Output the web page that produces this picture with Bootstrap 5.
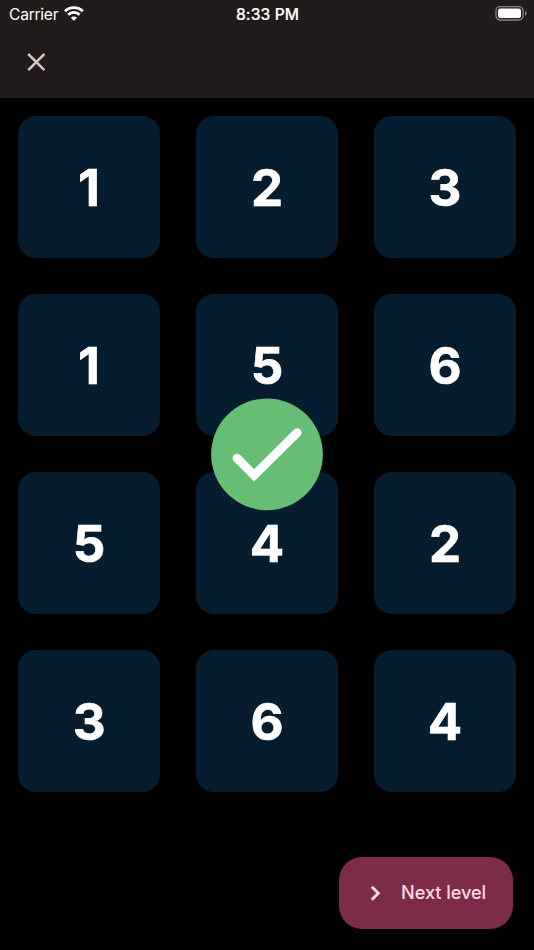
<!DOCTYPE html>
<html lang="en">
<head>
<meta charset="utf-8">
<meta name="viewport" content="width=device-width, initial-scale=1">
<title>Memory</title>
<link href="https://cdn.jsdelivr.net/npm/bootstrap@5.3.0/dist/css/bootstrap.min.css" rel="stylesheet">
<style>
  body { background: #000; font-family: Inter, "Liberation Sans", sans-serif; min-height: 950px; }
  .app-top { background: #211b1b; height: 98px; }
  .status { height: 28px; padding: 0 7px 0 9px; color: #fff; font-size: 15.6px; line-height: 28px; }
  .status > * { flex: 1 1 0; }
  .carrier { letter-spacing: -.26px; padding-top: 1px; }
  .wifi { margin-left: 5px; }
  .clock { font-weight: 500; letter-spacing: .1px; padding-top: 1px; padding-right: 1px; -webkit-text-stroke: .2px #fff; }
  .toolbar { height: 68px; padding-left: 26px; }
  .close-btn { color: #d9c5c6; line-height: 0; }
  .board { display: grid; grid-template-columns: repeat(3, 142.2px); grid-auto-rows: 142.2px; gap: 35.8px; padding: 18.3px 18px 0; }
  .tile { background: #061d2f; border-radius: 18px; color: #fff; font-size: 51px; font-weight: 700; line-height: 1; -webkit-text-stroke: .6px #fff; }
  .done { position: absolute; left: 211px; top: 398px; }
  .next-btn { width: 174px; height: 72px; border-radius: 23px; margin-right: 21px; margin-bottom: 21px; background: #7c2b49; color: #ffd9e2; font-size: 18.2px; font-weight: 500; line-height: 1; letter-spacing: -.08px; }
  .next-btn:hover { background: #7c2b49; color: #ffd9e2; }
  .next-label { padding-bottom: 1px; }
</style>
</head>
<body class="d-flex flex-column position-relative">
  <header class="app-top">
    <div class="status d-flex align-items-center">
      <div class="d-flex align-items-center">
        <span class="carrier">Carrier</span>
        <svg class="wifi" width="22" height="16" viewBox="0 0 22 16" fill="none" stroke="#fff" stroke-width="2.8">
          <path d="M2 5.3a12.6 12.6 0 0 1 17.8 0M5.2 8.7a8 8 0 0 1 11.4 0"/>
          <path d="M10.9 14.7 7.8 11.7a4.3 4.3 0 0 1 6.2 0z" fill="#fff" stroke="none"/>
        </svg>
      </div>
      <div class="clock text-center">8:33 PM</div>
      <div class="d-flex justify-content-end">
        <svg width="32" height="16" viewBox="0 0 32 16">
          <rect x="1" y=".6" width="27" height="13.4" rx="4" fill="none" stroke="#888485" stroke-width="1.3"/>
          <rect x="3" y="2.6" width="23" height="9.4" rx="2.2" fill="#fff"/>
          <path d="M30 4.8q1.6 1 1.6 2.5T30 9.8z" fill="#888485"/>
        </svg>
      </div>
    </div>
    <div class="toolbar d-flex align-items-center">
      <button type="button" class="close-btn btn p-0 border-0" aria-label="Close">
        <svg width="20" height="20" viewBox="0 0 20 20" fill="none" stroke="currentColor" stroke-width="2.5"><path d="M2.2 2 18.4 18.2M18.4 2 2.2 18.2"/></svg>
      </button>
    </div>
  </header>

  <main class="board">
    <div class="tile d-flex align-items-center justify-content-center">1</div>
    <div class="tile d-flex align-items-center justify-content-center">2</div>
    <div class="tile d-flex align-items-center justify-content-center">3</div>
    <div class="tile d-flex align-items-center justify-content-center">1</div>
    <div class="tile d-flex align-items-center justify-content-center">5</div>
    <div class="tile d-flex align-items-center justify-content-center">6</div>
    <div class="tile d-flex align-items-center justify-content-center">5</div>
    <div class="tile d-flex align-items-center justify-content-center">4</div>
    <div class="tile d-flex align-items-center justify-content-center">2</div>
    <div class="tile d-flex align-items-center justify-content-center">3</div>
    <div class="tile d-flex align-items-center justify-content-center">6</div>
    <div class="tile d-flex align-items-center justify-content-center">4</div>
  </main>

  <!-- level-complete badge over the board -->
  <svg class="done" width="112" height="113" viewBox="0 0 112 113" fill="none">
    <circle cx="56" cy="56.3" r="55.9" fill="#66bd74"/>
    <path d="M26 60.1 43.1 77.3 86.2 34.7" stroke="#fff" stroke-width="8.8" stroke-linecap="round"/>
  </svg>

  <footer class="mt-auto d-flex justify-content-end">
    <button type="button" class="next-btn btn border-0 p-0 d-flex align-items-center">
      <svg class="flex-shrink-0" width="62" height="20" viewBox="0 0 62 20" fill="none" stroke="currentColor" stroke-width="2.9"><path d="M32.8 3.7 39.3 10.2 32.8 16.7"/></svg>
      <span class="next-label">Next level</span>
    </button>
  </footer>
<script src="https://cdn.jsdelivr.net/npm/bootstrap@5.3.0/dist/js/bootstrap.bundle.min.js"></script>
</body>
</html>
